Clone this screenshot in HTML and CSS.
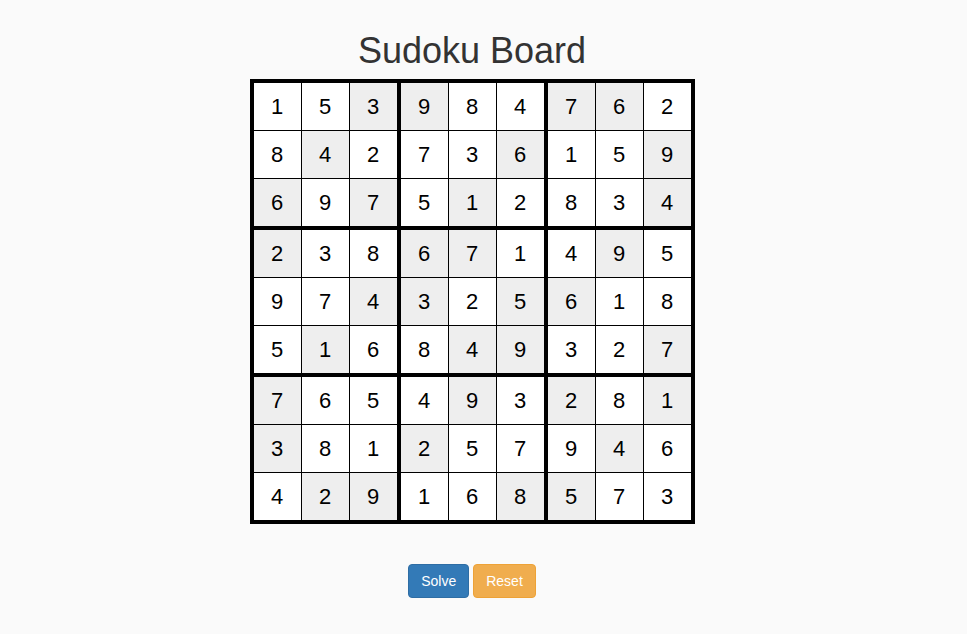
FILE: index.html
```html
<!DOCTYPE html>
<html lang="en">
<head>
<meta charset="utf-8">
<title>Sudoku Board</title>
<link rel="stylesheet" href="styles.css">
</head>
<body>
<main class="page">
  <h1 class="title">Sudoku Board</h1>
  <div class="board">
    <div class="box">
      <div class="cell">1</div><div class="cell">5</div><div class="cell g">3</div>
      <div class="cell">8</div><div class="cell g">4</div><div class="cell">2</div>
      <div class="cell g">6</div><div class="cell">9</div><div class="cell g">7</div>
    </div>
    <div class="box">
      <div class="cell g">9</div><div class="cell">8</div><div class="cell">4</div>
      <div class="cell">7</div><div class="cell">3</div><div class="cell g">6</div>
      <div class="cell">5</div><div class="cell g">1</div><div class="cell">2</div>
    </div>
    <div class="box">
      <div class="cell g">7</div><div class="cell g">6</div><div class="cell">2</div>
      <div class="cell">1</div><div class="cell">5</div><div class="cell g">9</div>
      <div class="cell">8</div><div class="cell">3</div><div class="cell g">4</div>
    </div>
    <div class="box">
      <div class="cell g">2</div><div class="cell">3</div><div class="cell">8</div>
      <div class="cell">9</div><div class="cell">7</div><div class="cell g">4</div>
      <div class="cell">5</div><div class="cell g">1</div><div class="cell">6</div>
    </div>
    <div class="box">
      <div class="cell g">6</div><div class="cell g">7</div><div class="cell">1</div>
      <div class="cell g">3</div><div class="cell">2</div><div class="cell g">5</div>
      <div class="cell">8</div><div class="cell g">4</div><div class="cell g">9</div>
    </div>
    <div class="box">
      <div class="cell">4</div><div class="cell g">9</div><div class="cell">5</div>
      <div class="cell g">6</div><div class="cell">1</div><div class="cell">8</div>
      <div class="cell">3</div><div class="cell">2</div><div class="cell g">7</div>
    </div>
    <div class="box">
      <div class="cell g">7</div><div class="cell">6</div><div class="cell">5</div>
      <div class="cell g">3</div><div class="cell">8</div><div class="cell">1</div>
      <div class="cell">4</div><div class="cell g">2</div><div class="cell g">9</div>
    </div>
    <div class="box">
      <div class="cell">4</div><div class="cell g">9</div><div class="cell">3</div>
      <div class="cell g">2</div><div class="cell">5</div><div class="cell">7</div>
      <div class="cell">1</div><div class="cell">6</div><div class="cell g">8</div>
    </div>
    <div class="box">
      <div class="cell g">2</div><div class="cell">8</div><div class="cell g">1</div>
      <div class="cell">9</div><div class="cell g">4</div><div class="cell">6</div>
      <div class="cell g">5</div><div class="cell">7</div><div class="cell">3</div>
    </div>
  </div>
  <div class="actions">
    <button class="btn btn-primary" type="button">Solve</button>
    <button class="btn btn-warning" type="button">Reset</button>
  </div>
</main>
</body>
</html>
```

FILE: styles.css
```css
html, body {
  margin: 0;
  padding: 0;
  background: #fafafa;
}

body {
  font-family: "Liberation Sans", Arial, Helvetica, sans-serif;
  color: #333;
}

.page {
  width: 944px;
  display: flex;
  flex-direction: column;
  align-items: center;
  padding-top: 31px;
}

.title {
  margin: 0 0 8px;
  font-size: 36px;
  line-height: 40px;
  font-weight: 500;
  color: #333;
}

.board {
  display: grid;
  grid-template-columns: repeat(3, auto);
  gap: 4px;
  padding: 4px;
  background: #000;
}

.box {
  display: grid;
  grid-template-columns: repeat(3, 47px);
  grid-auto-rows: 47px;
  gap: 1px;
  background: #000;
}

.cell {
  display: flex;
  align-items: center;
  justify-content: center;
  background: #fff;
  color: #000;
  font-size: 22px;
}

.cell.g {
  background: #eee;
}

.actions {
  margin-top: 40px;
  display: flex;
  gap: 4px;
}

.btn {
  font-family: "Liberation Sans", Arial, Helvetica, sans-serif;
  font-size: 14px;
  line-height: 20px;
  padding: 6px 12px;
  border: 1px solid transparent;
  border-radius: 4px;
  color: #fff;
  cursor: pointer;
}

.btn-primary {
  background: #337ab7;
  border-color: #2e6da4;
}

.btn-warning {
  background: #f0ad4e;
  border-color: #eea236;
}
```
